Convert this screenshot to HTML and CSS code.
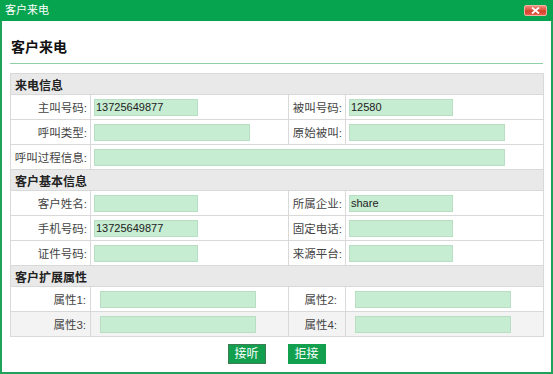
FILE: index.html
```html
<!DOCTYPE html>
<html lang="zh-CN">
<head>
<meta charset="utf-8">
<title>客户来电</title>
<link rel="stylesheet" href="styles.css">
</head>
<body>
<div class="dialog">
  <div class="titlebar">
    <span class="title">客户来电</span>
    <span class="close" title="关闭">
      <svg width="9" height="7" viewBox="0 0 9 7"><path d="M1 0.5 L8 6.5 M8 0.5 L1 6.5" stroke="#fff" stroke-width="1.8" fill="none"/></svg>
    </span>
  </div>
  <div class="body">
    <h1 class="heading">客户来电</h1>
    <table class="form">
      <colgroup><col class="c1"><col class="c2"><col class="c3"><col class="c4"></colgroup>
      <tr class="sec"><th colspan="4">来电信息</th></tr>
      <tr>
        <td class="lbl">主叫号码:</td>
        <td class="val"><input class="in in-s" value="13725649877"></td>
        <td class="lbl">被叫号码:</td>
        <td class="val"><input class="in in-s" value="12580"></td>
      </tr>
      <tr>
        <td class="lbl">呼叫类型:</td>
        <td class="val"><input class="in in-m" value=""></td>
        <td class="lbl">原始被叫:</td>
        <td class="val"><input class="in in-m" value=""></td>
      </tr>
      <tr>
        <td class="lbl">呼叫过程信息:</td>
        <td class="val" colspan="3"><input class="in in-l" value=""></td>
      </tr>
      <tr class="sec"><th colspan="4">客户基本信息</th></tr>
      <tr>
        <td class="lbl">客户姓名:</td>
        <td class="val"><input class="in in-s" value=""></td>
        <td class="lbl">所属企业:</td>
        <td class="val"><input class="in in-s" value="share"></td>
      </tr>
      <tr>
        <td class="lbl">手机号码:</td>
        <td class="val"><input class="in in-s" value="13725649877"></td>
        <td class="lbl">固定电话:</td>
        <td class="val"><input class="in in-s" value=""></td>
      </tr>
      <tr>
        <td class="lbl">证件号码:</td>
        <td class="val"><input class="in in-s" value=""></td>
        <td class="lbl">来源平台:</td>
        <td class="val"><input class="in in-s" value=""></td>
      </tr>
      <tr class="sec"><th colspan="4">客户扩展属性</th></tr>
      <tr class="ext">
        <td class="lbl">属性1:</td>
        <td class="val"><input class="in in-m" value=""></td>
        <td class="lbl">属性2:</td>
        <td class="val"><input class="in in-m" value=""></td>
      </tr>
      <tr class="ext alt">
        <td class="lbl">属性3:</td>
        <td class="val"><input class="in in-m" value=""></td>
        <td class="lbl">属性4:</td>
        <td class="val"><input class="in in-m" value=""></td>
      </tr>
    </table>
    <div class="actions">
      <button class="btn btn-focus">接听</button>
      <button class="btn">拒接</button>
    </div>
  </div>
</div>
</body>
</html>
```
FILE: styles.css
```css
html, body {
  margin: 0;
  padding: 0;
  background: #fff;
}
body {
  font-family: "Liberation Sans", "Noto Sans CJK SC", sans-serif;
  font-size: 12px;
  color: #333;
}
.dialog {
  width: 553px;
  height: 374px;
  box-sizing: border-box;
  display: flex;
  flex-direction: column;
}
.titlebar {
  height: 21px;
  flex: none;
  background: #07a44f;
  display: flex;
  align-items: center;
  justify-content: space-between;
  padding: 0 6px 0 5px;
}
.title {
  color: #fff;
  font-size: 11px;
  line-height: 21px;
}
.close {
  width: 23px;
  height: 11px;
  box-sizing: border-box;
  margin-top: -1px;
  border: 1px solid #f3b1a6;
  border-radius: 2px;
  background: linear-gradient(#f08a78, #d8412c 60%, #e4604c);
  display: flex;
  align-items: center;
  justify-content: center;
}
.close svg { display: block; }
.body {
  flex: 1;
  border: 2px solid #1fa35a;
  border-top: none;
  padding: 0 8px;
}
.heading {
  margin: 16px 0 9px;
  padding: 0 0 6px 1px;
  font-size: 14px;
  line-height: 20px;
  font-weight: bold;
  color: #111;
  border-bottom: 1px solid #8fd0a6;
}
.form {
  width: 533px;
  table-layout: fixed;
  border-collapse: collapse;
}
.c1 { width: 80px; }
.c2 { width: 198px; }
.c3 { width: 57px; }
.c4 { width: 198px; }
.form td, .form th {
  border: 1px solid #d9d9d9;
  padding: 0;
}
.sec th {
  height: 20px;
  background: #e9e9e9;
  text-align: left;
  padding-left: 4px;
  font-weight: bold;
  color: #222;
  font-size: 12px;
}
.form td {
  height: 24px;
}
.lbl {
  text-align: right;
  padding-right: 3px !important;
  color: #444;
  font-size: 11.5px;
  white-space: nowrap;
  overflow: hidden;
}
.val {
  padding-left: 3px !important;
}
.ext .lbl:first-child { padding-right: 4px !important; }
.ext .lbl:nth-child(3) { padding-right: 8px !important; }
.ext .val { padding-left: 9px !important; }
.alt td { background: #f3f3f3; }
.in {
  display: block;
  height: 17px;
  box-sizing: border-box;
  margin: 0;
  padding: 0 2px 0 1px;
  border: 1px solid #b8dfc4;
  background: #c6ecd1;
  font-family: "Liberation Sans", sans-serif;
  font-size: 11px;
  color: #222;
  outline: none;
}
.in-s { width: 104px; }
.in-m { width: 156px; }
.in-l { width: 411px; }
.actions {
  display: flex;
  justify-content: center;
  gap: 22px;
  margin-top: 7px;
}
.btn {
  width: 38px;
  height: 20px;
  box-sizing: border-box;
  padding: 0;
  border: 1px solid #12a04f;
  background: #12a04f;
  color: #fff;
  font-family: "Liberation Sans", "Noto Sans CJK SC", sans-serif;
  font-size: 12px;
  line-height: 18px;
  cursor: pointer;
}
.btn-focus {
  border-color: #3d7d55;
}
```
